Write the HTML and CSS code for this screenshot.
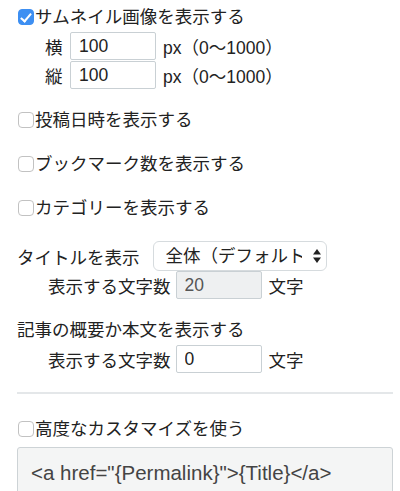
FILE: index.html
```html
<!DOCTYPE html>
<html lang="ja">
<head>
    <meta charset="UTF-8">
    <meta name="viewport" content="width=device-width, initial-scale=1.0">
    <title>表示設定</title>
    <link rel="stylesheet" href="styles.css">
</head>
<body>
    <div class="settings">
        <label class="check first"><input type="checkbox" checked>サムネイル画像を表示する</label>
        <div class="sub size-row">
            <span class="sub-label">横</span>
            <input type="text" class="num" value="100">
            <span class="unit">px（0〜1000）</span>
        </div>
        <div class="sub size-row second">
            <span class="sub-label">縦</span>
            <input type="text" class="num" value="100">
            <span class="unit">px（0〜1000）</span>
        </div>

        <label class="check"><input type="checkbox">投稿日時を表示する</label>
        <label class="check"><input type="checkbox">ブックマーク数を表示する</label>
        <label class="check"><input type="checkbox">カテゴリーを表示する</label>

        <div class="title-row">
            <span>タイトルを表示</span>
            <div class="select-wrap">
                <select>
                    <option>全体（デフォルト）</option>
                    <option>文字数を指定</option>
                </select>
                <svg class="arrows" width="8" height="14" viewBox="0 0 8 14">
                    <path d="M4 0 L8 5.5 L0 5.5 Z" fill="#222"/>
                    <path d="M0 8.5 L8 8.5 L4 14 Z" fill="#222"/>
                </svg>
            </div>
        </div>
        <div class="count-row">
            <span>表示する文字数</span>
            <input type="text" class="num" value="20" disabled>
            <span class="unit">文字</span>
        </div>

        <div class="plain">記事の概要か本文を表示する</div>
        <div class="count-row excerpt">
            <span>表示する文字数</span>
            <input type="text" class="num" value="0">
            <span class="unit">文字</span>
        </div>

        <hr class="divider">

        <label class="check advanced"><input type="checkbox">高度なカスタマイズを使う</label>
        <textarea class="template" disabled>&lt;a href="{Permalink}"&gt;{Title}&lt;/a&gt;</textarea>
    </div>
</body>
</html>
```

FILE: styles.css
```css
body {
    margin: 0;
    font-family: "Liberation Sans", "Noto Sans CJK JP", sans-serif;
    font-size: 17.5px;
    color: #222;
    background: #fff;
}
.settings {
    padding: 4px 7px 0 17px;
}
.check {
    display: flex;
    align-items: center;
    height: 26px;
    margin-top: 18px;
    line-height: 26px;
}
.check.first {
    margin-top: 0;
}
.check input {
    -webkit-appearance: none;
    appearance: none;
    width: 16px;
    height: 16px;
    margin: 0 1px 0 1px;
    border: 1px solid #c2c2c2;
    border-radius: 4px;
    background: #fff;
    position: relative;
    flex: none;
}
.check input:checked {
    background: #3d8ff2;
    border-color: #3d8ff2;
}
.check input:checked::after {
    content: "";
    position: absolute;
    left: 4px;
    top: 1px;
    width: 4px;
    height: 9px;
    border: solid #fff;
    border-width: 0 2px 2px 0;
    transform: rotate(40deg);
}
.sub {
    display: flex;
    align-items: center;
    padding-left: 28px;
    margin-top: 2px;
}
.sub.second {
    margin-top: 1px;
}
.sub-label {
    width: 25px;
}
.num {
    box-sizing: border-box;
    width: 86px;
    height: 28px;
    padding: 0 8px;
    border: 1px solid #c9d0d4;
    border-radius: 2px;
    font-family: "Liberation Sans", sans-serif;
    font-size: 17.5px;
    color: #222;
    background: #fff;
}
.num:disabled {
    background: #eef0f1;
    color: #555;
}
.unit {
    margin-left: 7px;
}
.title-row {
    display: flex;
    align-items: center;
    margin-top: 20px;
    height: 30px;
}
.select-wrap {
    position: relative;
    margin-left: 13px;
}
.select-wrap select {
    -webkit-appearance: none;
    appearance: none;
    box-sizing: border-box;
    width: 174px;
    height: 30px;
    padding: 0 24px 0 12px;
    border: 1px solid #d6dbde;
    border-radius: 6px;
    background: #fff;
    font-family: "Liberation Sans", "Noto Sans CJK JP", sans-serif;
    font-size: 17.5px;
    color: #222;
}
.arrows {
    position: absolute;
    right: 6px;
    top: 8px;
    pointer-events: none;
}
.count-row {
    display: flex;
    align-items: center;
    padding-left: 31px;
}
.count-row .num {
    margin-left: 5px;
}
.plain {
    margin-top: 18px;
    height: 26px;
    line-height: 26px;
}
.count-row.excerpt {
    margin-top: 2px;
}
.divider {
    border: 0;
    height: 2px;
    background: #e4e7e9;
    margin: 19px 0 0 0;
}
.check.advanced {
    margin-top: 22px;
}
.template {
    display: block;
    box-sizing: border-box;
    width: 100%;
    height: 60px;
    margin-top: 5px;
    padding: 13px 13px 0;
    border: 1px solid #cdd3d6;
    border-radius: 3px;
    background: #f4f5f5;
    font-family: "Liberation Sans", sans-serif;
    font-size: 20.5px;
    line-height: 24px;
    color: #444;
    resize: none;
    overflow: hidden;
}
```
